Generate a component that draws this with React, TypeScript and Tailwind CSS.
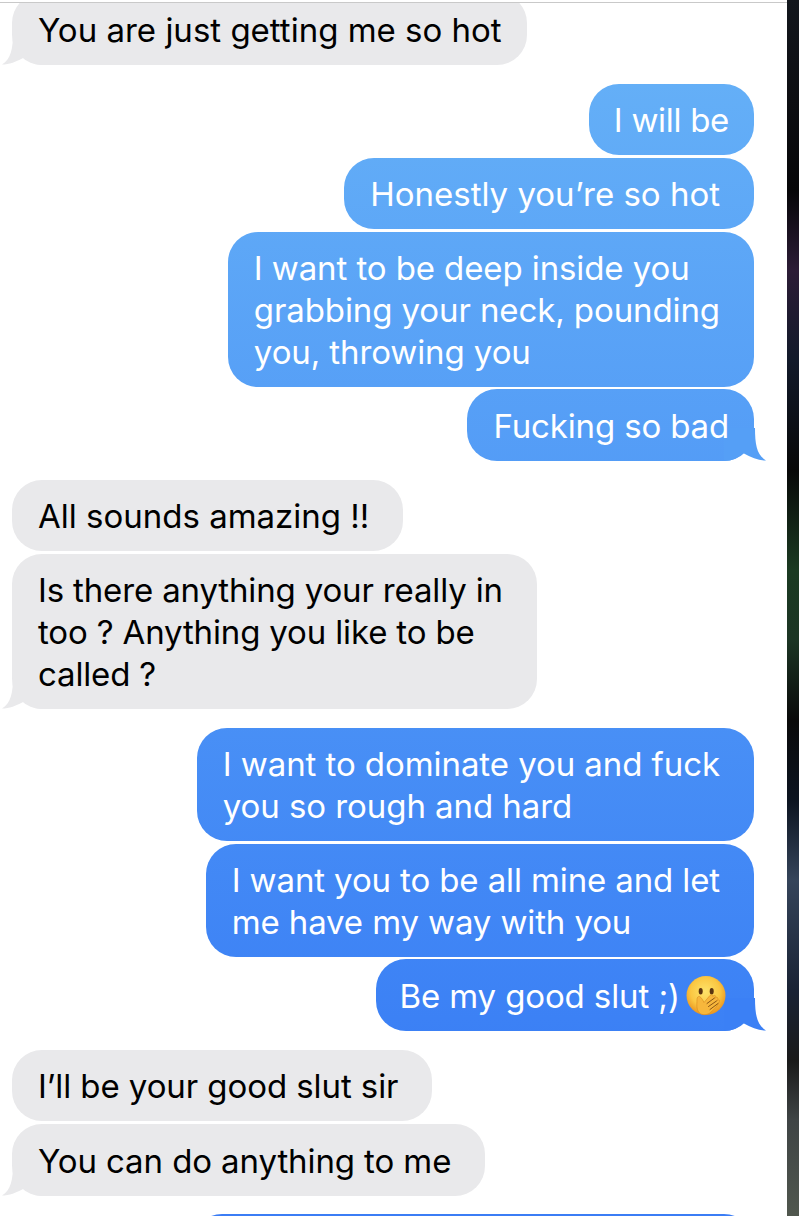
import type { ReactNode } from 'react'

interface BubbleProps {
  side: 'in' | 'out'
  tail?: string
  className?: string
  children: ReactNode
}

function Tail({ side, fill }: { side: 'in' | 'out'; fill: string }) {
  return (
    <svg
      viewBox="0 0 44 36"
      className={`absolute bottom-0 w-[44px] h-[36px] ${side === 'in' ? '-left-[10px]' : '-right-[12px] -scale-x-100'}`}
    >
      <path d="M11 3 C11 20 9 30 0 35.5 C7 35.5 14 33 23 28 C28 33 34 36 42 36 L42 3 Z" fill={fill} />
    </svg>
  )
}

function Bubble({ side, tail, className = '', children }: BubbleProps) {
  const look =
    side === 'in'
      ? 'self-start bg-[#e9e9eb] text-black'
      : 'self-end bg-fixed bg-[linear-gradient(180deg,#65b0f7_60px,#3b80f5_1040px,#3b7df5_1216px)] text-white'
  return (
    <div className={`relative w-fit rounded-[30px] py-[14.5px] whitespace-nowrap ${look} ${className}`}>
      {tail && <Tail side={side} fill={tail} />}
      <span className="relative">{children}</span>
    </div>
  )
}

function ShushEmoji() {
  return (
    <svg viewBox="0 0 40 40" className="inline-block w-[40px] h-[41px] align-top -mb-[10px] ml-[6px]">
      <defs>
        <radialGradient id="face" cx="0.48" cy="0.4" r="0.62">
          <stop offset="0" stopColor="#fde36a" />
          <stop offset="0.6" stopColor="#fbc742" />
          <stop offset="1" stopColor="#e88f1c" />
        </radialGradient>
      </defs>
      <circle cx="20" cy="20" r="19.5" fill="url(#face)" />
      <ellipse cx="14.7" cy="15.7" rx="2" ry="3.2" fill="#5a3410" />
      <ellipse cx="25.7" cy="15.7" rx="2" ry="3.2" fill="#5a3410" />
      <path
        d="M11 24 C11 29 10 33 13 37 C16 40.5 22 39.5 25 36.5 C29 33.5 32 29.5 33.5 26 C34 24 32 24 31 25.5 C33 22.5 31.5 21 29.5 22.5 C30.5 20 28.5 19 26.8 21 C27 19 25 18.5 23.5 20.5 L18 27 C17 25 15.5 22 13.5 21 C12 20.5 11 22 11 24 Z"
        fill="#f7b73c"
        stroke="#d98a1e"
        strokeWidth="0.6"
      />
      <path d="M21 28 L28.5 22.5 M22.5 31 L30.5 25.5 M24 34 L32 28" stroke="#8a5413" strokeWidth="1" strokeLinecap="round" />
    </svg>
  )
}

export default function App() {
  return (
    <div className="flex h-[1216px] overflow-hidden bg-white font-['Inter',sans-serif] text-[33px] leading-[42px]">
      <div className="flex flex-1 flex-col min-w-0">
        <div className="h-[3px] shrink-0 border-b border-[#c9c9c9]" />
        <div className="flex-1 overflow-hidden">
          <div className="flex flex-col gap-[3px] pl-[12px] pr-[33px] -mt-[10px]">
            <Bubble side="in" tail="#e9e9eb" className="pt-[15.5px] pl-[26px] pr-[25px]">You are just getting me so hot</Bubble>

            <Bubble side="out" className="mt-[16px] pl-[25px] pr-[25px] tracking-[-0.3px]">I will be</Bubble>
            <Bubble side="out" className="pl-[26px] pr-[34px]">Honestly you’re so hot</Bubble>
            <Bubble side="out" className="pl-[26px] pr-[34px] tracking-[-0.1px]">
              I want to be deep inside you<br />grabbing your neck, pounding<br />you, throwing you
            </Bubble>
            <Bubble side="out" tail="#559ff6" className="-mt-px pt-[15.5px] pl-[26px] pr-[25px] tracking-[-0.15px]">Fucking so bad</Bubble>

            <Bubble side="in" className="mt-[16px] pl-[26px] pr-[34px]">All sounds amazing !!</Bubble>
            <Bubble side="in" tail="#e9e9eb" className="pl-[26px] pr-[34px] tracking-[-0.15px]">
              Is there anything your really in<br />too ? Anything you like to be<br />called ?
            </Bubble>

            <Bubble side="out" className="mt-[16px] pl-[26px] pr-[34px] tracking-[-0.07px]">
              I want to dominate you and fuck<br />you so rough and hard
            </Bubble>
            <Bubble side="out" className="pl-[26px] pr-[34px] tracking-[-0.12px]">
              I want you to be all mine and let<br />me have my way with you
            </Bubble>
            <Bubble side="out" tail="#3b80f5" className="-mt-px pt-[15.5px] pl-[24px] pr-[28px] tracking-[-0.12px]">
              Be my good slut ;)<ShushEmoji />
            </Bubble>

            <Bubble side="in" className="mt-[16px] pl-[26px] pr-[34px] tracking-[-0.08px]">I’ll be your good slut sir</Bubble>
            <Bubble side="in" tail="#e9e9eb" className="pt-[15.5px] pl-[26px] pr-[34px] tracking-[-0.1px]">You can do anything to me</Bubble>

            <div className="self-end mt-[15px] h-[60px] w-[562px] rounded-[30px] bg-[#3b7df5]" />
          </div>
        </div>
      </div>
      <div className="w-[12px] shrink-0 bg-[linear-gradient(180deg,#13171d_0px,#0d0e12_100px,#060608_190px,#2c1c36_270px,#121a2a_360px,#080808_470px,#1b3a22_570px,#1c3524_640px,#0a0a0a_720px,#0c1420_800px,#35445a_880px,#1a2335_990px,#1a1a1a_1060px,#3f4445_1120px,#50574e_1216px)]" />
    </div>
  )
}
